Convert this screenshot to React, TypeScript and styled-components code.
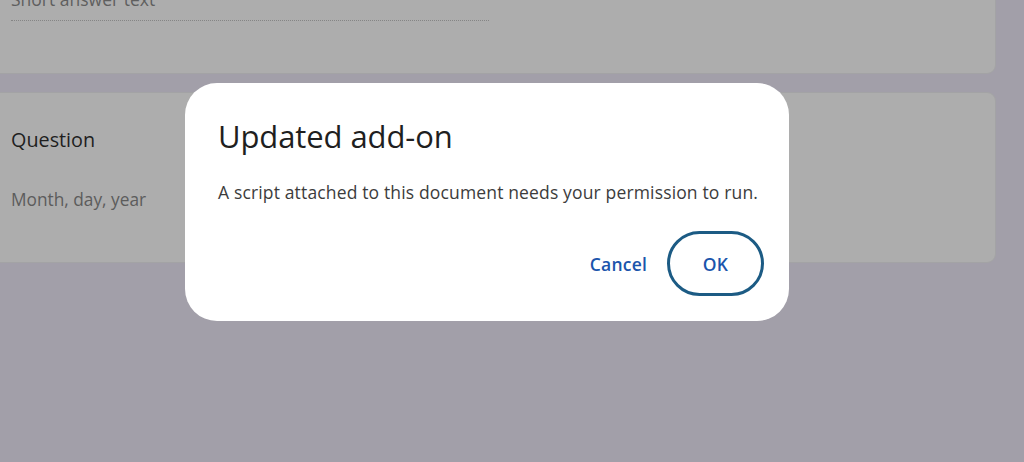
import styled, { createGlobalStyle } from "styled-components";

const GlobalStyle = createGlobalStyle`
  html, body {
    margin: 0;
    padding: 0;
    background: #a29fa9;
    font-family: "Open Sans", Roboto, Arial, sans-serif;
  }
`;

const Page = styled.div`
  position: relative;
  width: 1024px;
  height: 462px;
  overflow: hidden;
`;

const FormColumn = styled.div`
  display: flex;
  flex-direction: column;
  gap: 18px;
  width: 1016px;
  margin-left: -20px;
  margin-top: -60px;
`;

const Card = styled.div<{ $height: number }>`
  box-sizing: border-box;
  height: ${(p) => p.$height}px;
  background: #adadad;
  border: 1px solid #a3a3a5;
  border-radius: 9px;
  padding-left: 30px;
  display: flex;
  flex-direction: column;
`;

const ShortAnswer = styled.div`
  margin-top: 47px;
  width: 478px;
  font-size: 17.5px;
  line-height: 22px;
  color: #5f5f5f;
  padding-bottom: 10px;
  border-bottom: 1px dotted #858585;
`;

const QuestionTitle = styled.div`
  margin-top: 33px;
  font-size: 19.8px;
  line-height: 28px;
  color: #1f1f1f;
`;

const DateHint = styled.div`
  margin-top: 35px;
  font-size: 17.3px;
  line-height: 22px;
  color: #5c5c5c;
`;

const Dialog = styled.div`
  position: absolute;
  left: 185px;
  top: 83px;
  box-sizing: border-box;
  width: 604px;
  height: 238px;
  background: #ffffff;
  border-radius: 32px;
  padding: 0 25px 0 33px;
  display: flex;
  flex-direction: column;
`;

const DialogTitle = styled.h2`
  margin: 34px 0 0;
  font-size: 31px;
  font-weight: 400;
  line-height: 38px;
  letter-spacing: -0.1px;
  color: #1f1f1f;
`;

const DialogBody = styled.p`
  margin: 26px 0 0;
  font-size: 17.5px;
  line-height: 22px;
  letter-spacing: 0.15px;
  color: #3c3c3c;
`;

const Actions = styled.div`
  margin-top: 28px;
  display: flex;
  justify-content: flex-end;
  align-items: center;
  gap: 20px;
`;

const TextButton = styled.button<{ $outlined?: boolean }>`
  font-family: inherit;
  font-size: 17.5px;
  font-weight: 600;
  letter-spacing: 0.2px;
  color: #1b55ac;
  background: transparent;
  cursor: pointer;
  box-sizing: border-box;
  padding: 0;
  border: ${(p) => (p.$outlined ? "3px solid #1c5b84" : "none")};
  border-radius: 33px;
  width: ${(p) => (p.$outlined ? "97px" : "auto")};
  height: ${(p) => (p.$outlined ? "65px" : "auto")};
`;

export default function App() {
  return (
    <Page>
      <GlobalStyle />
      <FormColumn>
        <Card $height={134}>
          <ShortAnswer>Short answer text</ShortAnswer>
        </Card>
        <Card $height={171}>
          <QuestionTitle>Question</QuestionTitle>
          <DateHint>Month, day, year</DateHint>
        </Card>
      </FormColumn>
      <Dialog>
        <DialogTitle>Updated add-on</DialogTitle>
        <DialogBody>
          A script attached to this document needs your permission to run.
        </DialogBody>
        <Actions>
          <TextButton>Cancel</TextButton>
          <TextButton $outlined>OK</TextButton>
        </Actions>
      </Dialog>
    </Page>
  );
}
